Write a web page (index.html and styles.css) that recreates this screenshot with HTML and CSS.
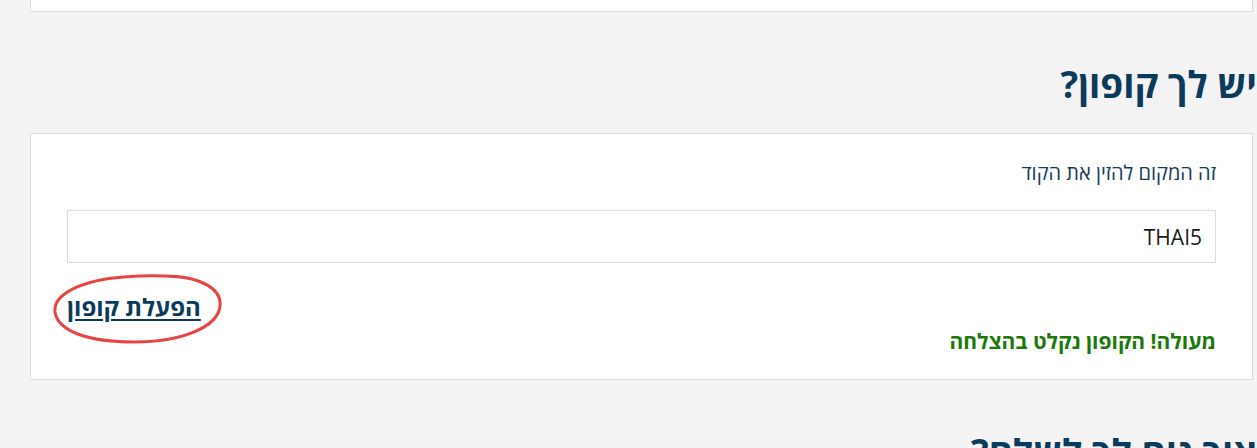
FILE: index.html
```html
<!DOCTYPE html>
<html lang="he" dir="rtl">

<head>
     <meta charset="UTF-8">
     <meta name="viewport" content="width=device-width, initial-scale=1.0">
     <title>קופון</title>
     <link rel="stylesheet" href="styles.css">
</head>

<body>
     <div class="page">
          <div class="card card-top"></div>

          <h2 class="section-title">יש לך קופון?</h2>

          <div class="card coupon-card">
               <label class="coupon-label" for="coupon">זה המקום להזין את הקוד</label>
               <input class="coupon-input" id="coupon" type="text" value="THAI5">

               <div class="apply-row">
                    <a href="#" class="apply-link">הפעלת קופון
                         <svg class="circle-mark" width="172" height="74" viewBox="0 0 172 74">
                              <path d="M108 4 C150 3 170 18 168 34 C166 55 130 70 82 70 C38 70 6 60 3 40 C1 22 30 8 72 5 C98 3 125 4 140 7"
                                   fill="none" stroke="#e84444" stroke-width="3" stroke-linecap="round" />
                         </svg>
                    </a>
               </div>

               <p class="coupon-success">מעולה! הקופון נקלט בהצלחה</p>
          </div>

          <h2 class="section-title">איך נוח לך לשלם?</h2>
     </div>
</body>

</html>
```

FILE: styles.css
```css
* {
     box-sizing: border-box;
     margin: 0;
     padding: 0;
}

html {
     font-family: "Open Sans", "DejaVu Sans", sans-serif;
}

body {
     background-color: #f3f3f3;
     overflow: hidden;
}

.page {
     padding: 0 4px 0 30px;
}

.card {
     background-color: #fff;
     border: 1px solid #dcdcdc;
}

.card-top {
     height: 12px;
     border-top: none;
}

.section-title {
     font-size: 37px;
     font-weight: 700;
     line-height: 44px;
     color: #0b3b5c;
     margin: 50px -4px 27px 0;
}

.coupon-card {
     padding: 26px 36px 25px 36px;
}

.coupon-label {
     display: block;
     font-size: 20px;
     line-height: 26px;
     color: #173b5c;
     margin-bottom: 24px;
}

.coupon-input {
     display: block;
     width: 100%;
     height: 53px;
     border: 1px solid #dcdcdc;
     padding: 0 13px;
     font-family: inherit;
     font-size: 21px;
     color: #1a1a1a;
     direction: rtl;
     outline: none;
}

.apply-row {
     display: flex;
     justify-content: flex-end;
     margin-top: 30px;
}

.apply-link {
     position: relative;
     font-size: 24px;
     font-weight: 700;
     line-height: 28px;
     color: #0b3b5c;
     text-decoration: underline;
     text-underline-offset: 3px;
}

.circle-mark {
     position: absolute;
     left: -15px;
     top: -21px;
     pointer-events: none;
}

.coupon-success {
     font-size: 21px;
     font-weight: 700;
     line-height: 26px;
     color: #1a7a06;
     margin-top: 7px;
}
```
